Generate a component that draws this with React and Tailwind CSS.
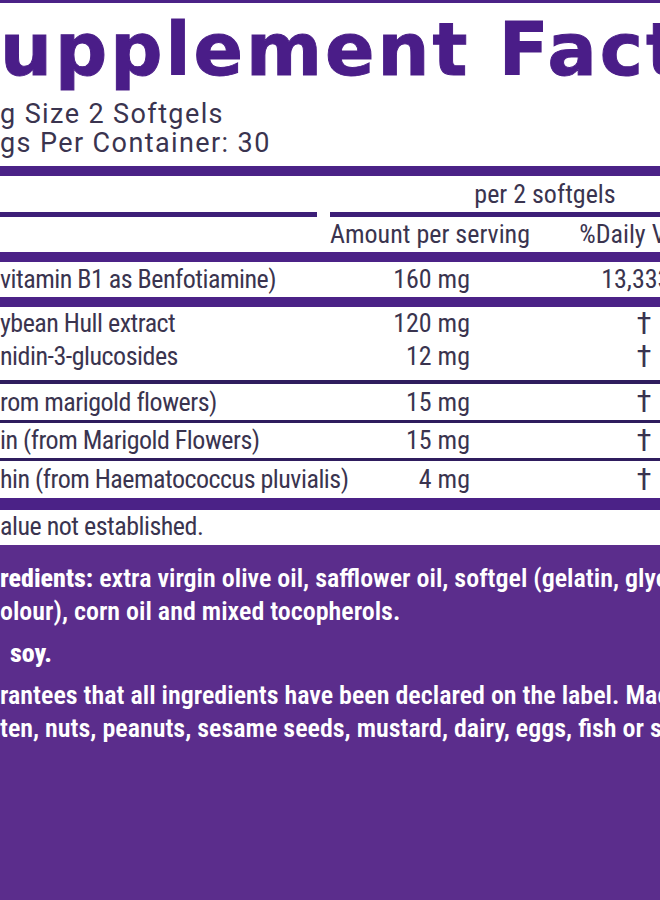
const rows = [
  { name: "ybean Hull extract", amount: "120 mg", dv: "†" },
  { name: "nidin-3-glucosides", amount: "12 mg", dv: "†" },
];

const Row = ({ name, amount, dv, h }) => (
  <div className={`flex items-center whitespace-nowrap ${h}`}>
    <div className="w-[330px] shrink-0 tracking-[-0.5px]">{name}</div>
    <div className="w-[140px] shrink-0 text-right">{amount}</div>
    <div className={`w-[348px] shrink-0 text-center ${dv === "†" ? "text-[31px] leading-[28px] font-normal" : ""}`}>{dv}</div>
  </div>
);

export default function App() {
  return (
    <div className="w-[660px] h-[900px] overflow-hidden bg-white flex flex-col font-[Roboto]">
      <div className="h-[3px] bg-[#4b2287] shrink-0" />

      <h1 className="mt-[12px] font-['DejaVu_Sans'] font-bold text-[73px] leading-[70px] tracking-[3px] text-[#4a1d88] whitespace-nowrap [-webkit-text-stroke:1px_#4a1d88]">
        upplement Fact
      </h1>

      <div className="mt-[15px] text-[27px] leading-[29px] tracking-[1.4px] text-[#3a344f] whitespace-nowrap">
        <p>g Size 2 Softgels</p>
        <p>gs Per Container: 30</p>
      </div>

      <div className="mt-[8px] h-[10px] bg-[#4b2287] shrink-0" />

      <div className="font-stretch-condensed text-[26px] text-[#3a344f]">
        <div className="flex items-center h-[36px] whitespace-nowrap">
          <div className="w-[330px] shrink-0" />
          <div className="w-[430px] shrink-0 text-center">per 2 softgels</div>
        </div>

        <div className="flex h-[5px]">
          <div className="w-[317px] bg-[#3d1f78]" />
          <div className="ml-[13px] flex-1 bg-[#3d1f78]" />
        </div>

        <div className="flex items-center h-[35px] whitespace-nowrap">
          <div className="w-[330px] shrink-0" />
          <div className="w-[140px] shrink-0">Amount per serving</div>
          <div className="w-[348px] shrink-0 text-center">%Daily Value</div>
        </div>

        <div className="h-[10px] bg-[#4b2287]" />
        <Row name="vitamin B1 as Benfotiamine)" amount="160 mg" dv="13,333%" h="h-[35px]" />
        <div className="h-[10px] bg-[#4b2287]" />

        <div className="pb-[7px]">
          {rows.map((r) => (
            <Row key={r.name} {...r} h="h-[33px]" />
          ))}
        </div>

        <div className="h-[4px] bg-[#2f1d5e]" />
        <Row name="rom marigold flowers)" amount="15 mg" dv="†" h="h-[36px]" />
        <div className="h-[3px] bg-[#2f1d5e]" />
        <Row name="in (from Marigold Flowers)" amount="15 mg" dv="†" h="h-[35px]" />
        <div className="h-[3px] bg-[#2f1d5e]" />
        <Row name="hin (from Haematococcus pluvialis)" amount="4 mg" dv="†" h="h-[37px]" />
        <div className="h-[12px] bg-[#4b2287]" />

        <div className="flex items-center h-[32px] whitespace-nowrap tracking-[-0.5px]">alue not established.</div>
      </div>

      <div className="mt-[3px] flex-1 bg-[#5b2d8c] pt-[17px] text-white font-stretch-condensed font-semibold text-[26px] leading-[33px] whitespace-nowrap">
        <p>
          <span className="font-extrabold">redients:</span> extra virgin olive oil, safflower oil, softgel (gelatin, glycerin,
        </p>
        <p>olour), corn oil and mixed tocopherols.</p>
        <p className="mt-[9px] pl-[10px] font-extrabold">soy.</p>
        <p className="mt-[9px]">rantees that all ingredients have been declared on the label. Made without</p>
        <p>ten, nuts, peanuts, sesame seeds, mustard, dairy, eggs, fish or shellfish.</p>
      </div>
    </div>
  );
}
